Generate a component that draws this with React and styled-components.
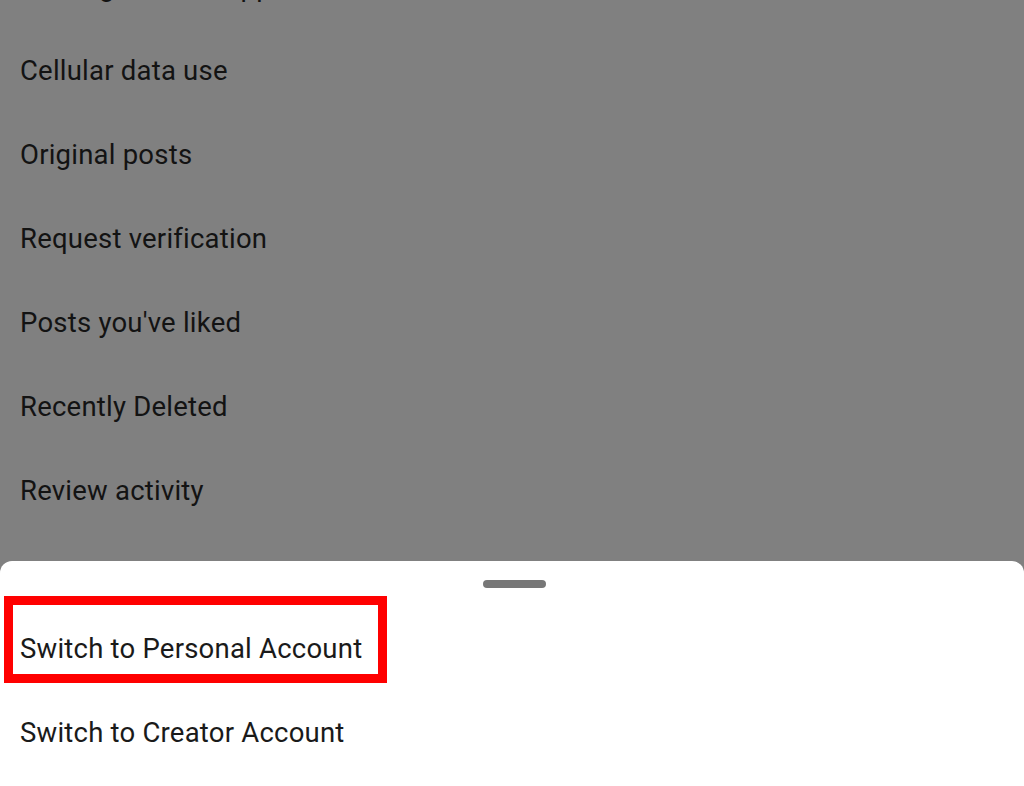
import React from 'react';
import styled, { createGlobalStyle } from 'styled-components';

const GlobalStyle = createGlobalStyle`
  html, body {
    margin: 0;
    padding: 0;
    height: 100%;
  }
  #root {
    height: 100%;
  }
  body {
    font-family: Roboto, "Noto Sans", sans-serif;
  }
`;

const Screen = styled.div`
  height: 786px;
  display: flex;
  flex-direction: column;
  background: #808080;
  overflow: hidden;
`;

const SettingsList = styled.div`
  flex: 1;
  overflow: hidden;
`;

const ListInner = styled.div`
  margin-top: -56px;
  display: flex;
  flex-direction: column;
`;

const Row = styled.div`
  height: 84px;
  display: flex;
  align-items: center;
  padding-left: 20px;
  font-size: 27.5px;
  letter-spacing: 0.22px;
  color: ${({ $dim }) => ($dim ? '#131313' : '#1a1a1a')};
`;

const Sheet = styled.div`
  position: relative;
  height: 225px;
  background: #ffffff;
  border-radius: 12px 12px 0 0;
  display: flex;
  flex-direction: column;
`;

const Handle = styled.div`
  align-self: center;
  width: 63px;
  height: 8px;
  margin: 19px 0 18px 4px;
  border-radius: 4px;
  background: #777777;
`;

const Highlight = styled.div`
  position: absolute;
  top: 35px;
  left: 4px;
  width: 383px;
  height: 87px;
  box-sizing: border-box;
  border: 9px solid #ff0000;
  pointer-events: none;
`;

const settings = [
  'Sharing to other apps',
  'Cellular data use',
  'Original posts',
  'Request verification',
  "Posts you've liked",
  'Recently Deleted',
  'Review activity',
];

const options = ['Switch to Personal Account', 'Switch to Creator Account'];

export default function App() {
  return (
    <>
      <GlobalStyle />
      <Screen>
        <SettingsList>
          <ListInner>
            {settings.map((s) => (
              <Row key={s} $dim>{s}</Row>
            ))}
          </ListInner>
        </SettingsList>
        <Sheet>
          <Handle />
          {options.map((o) => (
            <Row key={o}>{o}</Row>
          ))}
          <Highlight />
        </Sheet>
      </Screen>
    </>
  );
}
